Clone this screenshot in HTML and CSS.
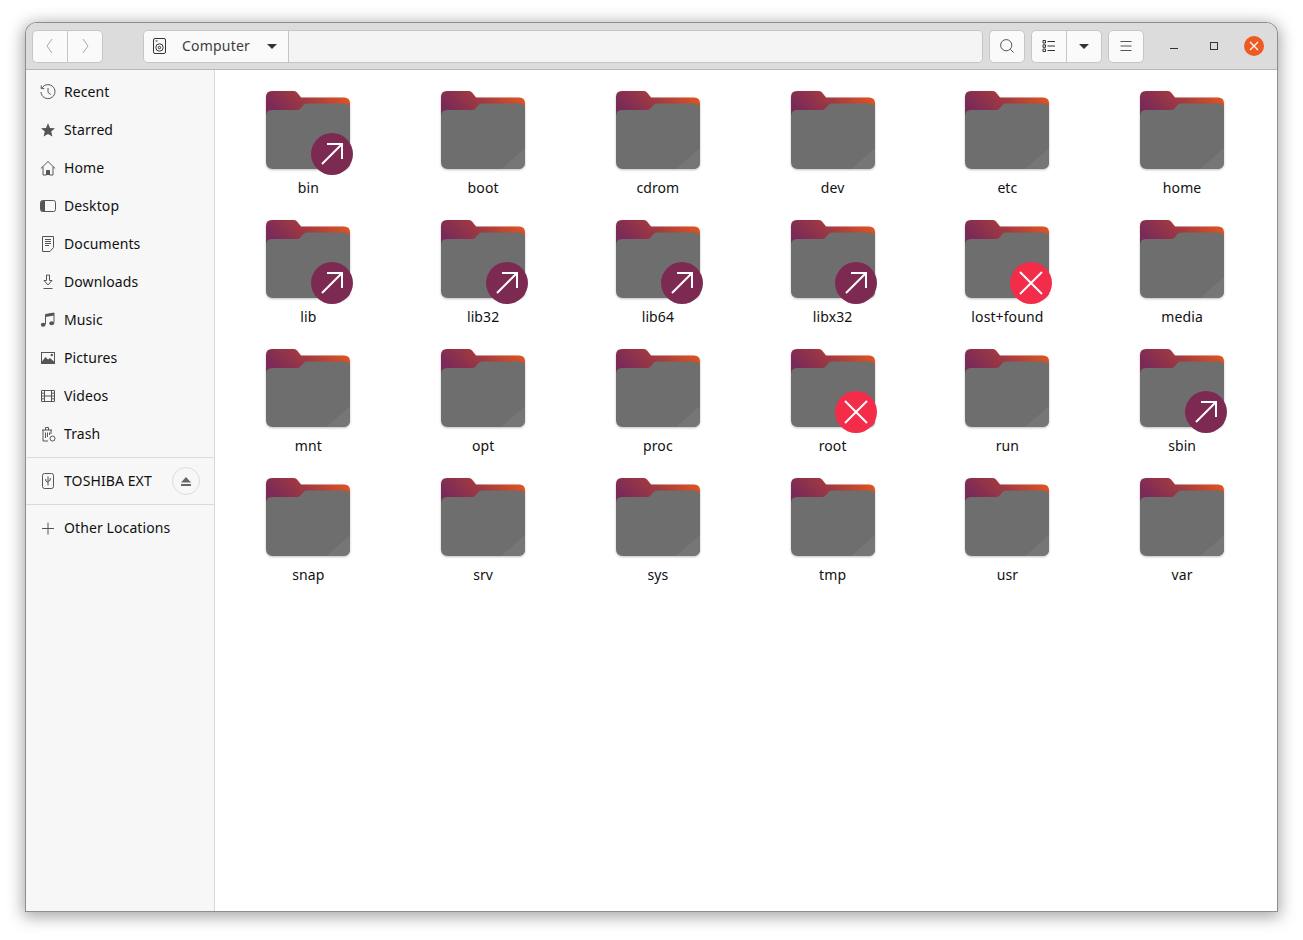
FILE: index.html
```html
<!DOCTYPE html>
<html lang="en">
<head>
  <meta charset="UTF-8">
  <title>Computer</title>
  <link rel="stylesheet" href="styles.css">
</head>
<body>

<svg class="defs" width="0" height="0">
  <defs>
    <linearGradient id="back" x1="0" y1="0.35" x2="1" y2="0">
      <stop offset="0" stop-color="#7a2a58"/>
      <stop offset="0.45" stop-color="#a33a40"/>
      <stop offset="1" stop-color="#ea5a1c"/>
    </linearGradient>
    <symbol id="folder" viewBox="0 0 90 86">
      <path d="M0 24V6Q0 0 6 0H28Q30 0 31 1.5L35 6.5H78Q84 6.5 84 12.5V30H0Z" fill="url(#back)"/>
      <path d="M0 71V25Q0 19 6 19H31Q33 19 34 18L38 13.5Q39 12.5 41 12.5H78Q84 12.5 84 18V71Q84 78 77 78H7Q0 78 0 71Z" fill="#6e6e6e"/>
      <path d="M84 57V71Q84 78 77 78H60Z" fill="#767676"/>
    </symbol>
    <symbol id="link" viewBox="0 0 42 42">
      <circle cx="21" cy="21" r="21" fill="#7d2a53"/>
      <path d="M11 31L31 11M16 11H31V26" fill="none" stroke="#fff" stroke-width="2"/>
    </symbol>
    <symbol id="denied" viewBox="0 0 42 42">
      <circle cx="21" cy="21" r="21" fill="#f32c49"/>
      <path d="M10 10L32 32M32 10L10 32" fill="none" stroke="#fff" stroke-width="2"/>
    </symbol>
  </defs>
</svg>

<div class="window">
  <header class="toolbar">
    <div class="btn-group nav">
      <button class="btn"><svg width="16" height="16" viewBox="0 0 16 16"><path d="M10 1L5 8L10 15" class="ico faint"/></svg></button>
      <button class="btn"><svg width="16" height="16" viewBox="0 0 16 16"><path d="M6 1L11 8L6 15" class="ico faint"/></svg></button>
    </div>
    <div class="path-bar">
      <div class="path-current">
        <svg width="14" height="16" viewBox="0 0 14 16"><rect x="0.5" y="0.5" width="12" height="15" rx="1.5" class="ico dark"/><circle cx="6.5" cy="9.5" r="3.7" class="ico dark"/><circle cx="6.5" cy="9.5" r="1.2" class="ico dark"/><path d="M2.5 3H4.5" class="ico dark"/></svg>
        <span>Computer</span>
        <i class="caret"></i>
      </div>
      <div class="path-rest"></div>
    </div>
    <button class="btn solo"><svg width="16" height="16" viewBox="0 0 16 16"><circle cx="7.2" cy="7.2" r="5.6" class="ico"/><path d="M11.4 11.4L14.6 14.6" class="ico"/></svg></button>
    <div class="btn-group view">
      <button class="btn"><svg width="14" height="14" viewBox="0 0 14 14"><path d="M1 1.5H3.5V4H1ZM1 5.8H3.5V8.3H1ZM1 10H3.5V12.5H1ZM5.5 2.5H13M5.5 7H13M5.5 11.5H13" class="ico dark"/></svg></button>
      <button class="btn"><i class="caret"></i></button>
    </div>
    <button class="btn solo"><svg width="14" height="14" viewBox="0 0 14 14"><path d="M1.5 2.5H12.5M1.5 7H12.5M1.5 11.5H12.5" class="ico"/></svg></button>
    <div class="win-controls">
      <div class="win-slot"><svg width="10" height="10" viewBox="0 0 10 10"><path d="M1 7.5H9" class="ico dark"/></svg></div>
      <div class="win-slot"><svg width="10" height="10" viewBox="0 0 10 10"><rect x="1.5" y="1.5" width="7" height="7" class="ico dark"/></svg></div>
      <div class="win-slot"><div class="close"><svg width="10" height="10" viewBox="0 0 10 10"><path d="M1 1L9 9M9 1L1 9" fill="none" stroke="#fff" stroke-width="1.2"/></svg></div></div>
    </div>
  </header>

  <div class="body">
    <aside class="sidebar">
      <ul class="places">
        <li><svg width="16" height="16" viewBox="0 0 16 16"><path d="M2 4A7 7 0 1 1 1 8M1.2 1.5V4.6H4.3M8 4V8.4L10.8 10.6" class="ico"/></svg>Recent</li>
        <li><svg width="16" height="16" viewBox="0 0 16 16"><path d="M8 1.2L10 5.9L15 6.3L11.2 9.6L12.4 14.6L8 11.9L3.6 14.6L4.8 9.6L1 6.3L6 5.9Z" fill="#555"/></svg>Starred</li>
        <li><svg width="16" height="16" viewBox="0 0 16 16"><path d="M0.8 8.5L8 1.5L15.2 8.5M3 6.8V15H6.5V10.5H9.5V15H13V6.8" class="ico"/><rect x="6.5" y="10.5" width="3" height="4.5" fill="#555"/></svg>Home</li>
        <li><svg width="16" height="16" viewBox="0 0 16 16"><rect x="0.5" y="2.5" width="15" height="11" rx="2" class="ico"/><path d="M1 4Q1 3 2 3H5V13H2Q1 13 1 12Z" fill="#555"/></svg>Desktop</li>
        <li><svg width="16" height="16" viewBox="0 0 16 16"><path d="M2.5 0.5H13.5V11.5L10 15.5H2.5ZM5 3.5H11M5 5.5H11M5 7.5H11M5 9.5H9" class="ico"/></svg>Documents</li>
        <li><svg width="16" height="16" viewBox="0 0 16 16"><path d="M6.5 1H9.5V6.5H12L8 11L4 6.5H6.5ZM3.5 14.5H12.5" class="ico"/></svg>Downloads</li>
        <li><svg width="16" height="16" viewBox="0 0 16 16"><path d="M5.5 12V2.5L14 1V10.5" class="ico"/><path d="M5.5 2.5L14 1V3.5L5.5 5Z" fill="#555"/><ellipse cx="3.2" cy="12.8" rx="2.4" ry="2" fill="#555"/><ellipse cx="11.7" cy="11.3" rx="2.4" ry="2" fill="#555"/></svg>Music</li>
        <li><svg width="16" height="16" viewBox="0 0 16 16"><rect x="1.5" y="2.5" width="13" height="11" class="ico"/><path d="M1.5 12L5.5 7L8 9.5L10 8L14.5 12V14H1.5Z" fill="#555"/><circle cx="11.8" cy="5" r="1.2" fill="#555"/></svg>Pictures</li>
        <li><svg width="16" height="16" viewBox="0 0 16 16"><path d="M1.5 2.5H14.5V13.5H1.5ZM4.5 2.5V13.5M11.5 2.5V13.5M4.5 8H11.5M1.5 5.2H4.5M1.5 8H4.5M1.5 10.8H4.5M11.5 5.2H14.5M11.5 8H14.5M11.5 10.8H14.5" class="ico"/></svg>Videos</li>
        <li><svg width="16" height="16" viewBox="0 0 16 16"><path d="M2 4H12M5.5 4V1.5H8.5V4M3 4V15H8M11 4V8M5.5 6.5V12M7.5 6.5V11M9.5 6.5V9" class="ico"/><circle cx="12.5" cy="12.5" r="2.5" class="ico"/></svg>Trash</li>
      </ul>
      <div class="device">
        <svg width="16" height="16" viewBox="0 0 16 16"><rect x="2.5" y="0.5" width="11" height="15" rx="2" class="ico"/><path d="M8 3.5V12.5M5.8 6V8L8 9.5M10.2 5V7.2L8 8.5" class="ico"/></svg>
        <span>TOSHIBA EXT</span>
        <div class="eject"><svg width="10" height="9" viewBox="0 0 10 9"><path d="M5 0L10 5.5H0ZM0 7H10V9H0Z" fill="#666"/></svg></div>
      </div>
      <div class="other">
        <svg width="16" height="16" viewBox="0 0 16 16"><path d="M8 2.5V14.5M2 8.5H14" class="ico"/></svg>Other Locations
      </div>
    </aside>

    <main class="files">
      <div class="file"><svg class="folder"><use href="#folder"/></svg><svg class="emblem"><use href="#link"/></svg><span>bin</span></div>
      <div class="file"><svg class="folder"><use href="#folder"/></svg><span>boot</span></div>
      <div class="file"><svg class="folder"><use href="#folder"/></svg><span>cdrom</span></div>
      <div class="file"><svg class="folder"><use href="#folder"/></svg><span>dev</span></div>
      <div class="file"><svg class="folder"><use href="#folder"/></svg><span>etc</span></div>
      <div class="file"><svg class="folder"><use href="#folder"/></svg><span>home</span></div>
      <div class="file"><svg class="folder"><use href="#folder"/></svg><svg class="emblem"><use href="#link"/></svg><span>lib</span></div>
      <div class="file"><svg class="folder"><use href="#folder"/></svg><svg class="emblem"><use href="#link"/></svg><span>lib32</span></div>
      <div class="file"><svg class="folder"><use href="#folder"/></svg><svg class="emblem"><use href="#link"/></svg><span>lib64</span></div>
      <div class="file"><svg class="folder"><use href="#folder"/></svg><svg class="emblem"><use href="#link"/></svg><span>libx32</span></div>
      <div class="file"><svg class="folder"><use href="#folder"/></svg><svg class="emblem"><use href="#denied"/></svg><span>lost+found</span></div>
      <div class="file"><svg class="folder"><use href="#folder"/></svg><span>media</span></div>
      <div class="file"><svg class="folder"><use href="#folder"/></svg><span>mnt</span></div>
      <div class="file"><svg class="folder"><use href="#folder"/></svg><span>opt</span></div>
      <div class="file"><svg class="folder"><use href="#folder"/></svg><span>proc</span></div>
      <div class="file"><svg class="folder"><use href="#folder"/></svg><svg class="emblem"><use href="#denied"/></svg><span>root</span></div>
      <div class="file"><svg class="folder"><use href="#folder"/></svg><span>run</span></div>
      <div class="file"><svg class="folder"><use href="#folder"/></svg><svg class="emblem"><use href="#link"/></svg><span>sbin</span></div>
      <div class="file"><svg class="folder"><use href="#folder"/></svg><span>snap</span></div>
      <div class="file"><svg class="folder"><use href="#folder"/></svg><span>srv</span></div>
      <div class="file"><svg class="folder"><use href="#folder"/></svg><span>sys</span></div>
      <div class="file"><svg class="folder"><use href="#folder"/></svg><span>tmp</span></div>
      <div class="file"><svg class="folder"><use href="#folder"/></svg><span>usr</span></div>
      <div class="file"><svg class="folder"><use href="#folder"/></svg><span>var</span></div>
    </main>
  </div>
</div>

</body>
</html>
```

FILE: styles.css
```css
html,
body {
  margin: 0;
  height: 100%;
  overflow: hidden;
}

body {
  background: #fff;
  padding: 23px 26px 29px;
  box-sizing: border-box;
  font-family: 'Noto Sans', sans-serif;
  font-size: 14px;
  letter-spacing: 0.1px;
  color: #111;
}

.defs {
  position: absolute;
}

svg {
  display: block;
  flex: none;
}

.ico {
  fill: none;
  stroke: #555;
  stroke-width: 1;
}

.ico.faint {
  stroke: #a8a8a8;
}

.ico.dark {
  stroke: #333;
}

.window {
  height: 100%;
  display: flex;
  flex-direction: column;
  border-radius: 11px 11px 0 0;
  overflow: hidden;
  box-shadow: 0 0 0 1px #8e8e8e, 0 3px 16px 3px rgba(0, 0, 0, 0.35);
  background: #fff;
}

/* header */
.toolbar {
  height: 47px;
  flex: none;
  display: flex;
  align-items: center;
  padding: 0 3px 0 6px;
  background: #dcdcdc;
  border-bottom: 1px solid #b8b8b8;
  box-sizing: border-box;
}

.btn {
  width: 36px;
  height: 33px;
  padding: 0;
  display: flex;
  align-items: center;
  justify-content: center;
  background: #fafafa;
  border: 1px solid #c6c6c6;
  border-radius: 5px;
}

.btn-group {
  display: flex;
}

.btn-group .btn:first-child {
  width: 35px;
  border-radius: 5px 0 0 5px;
  border-right: 0;
}

.btn-group .btn:last-child {
  border-radius: 0 5px 5px 0;
}

.nav {
  margin-right: 40px;
}

.path-bar {
  flex: 1;
  display: flex;
  height: 33px;
  margin-right: 6px;
  border: 1px solid #c6c6c6;
  border-radius: 5px;
  box-sizing: border-box;
  overflow: hidden;
}

.path-current {
  width: 145px;
  flex: none;
  display: flex;
  align-items: center;
  padding: 0 0 2px 9px;
  box-sizing: border-box;
  background: #fafafa;
  border-right: 1px solid #c6c6c6;
  color: #3d3d3d;
}

.path-current svg {
  margin-top: 2px;
}

.path-current span {
  margin-left: 15px;
  flex: 1;
  letter-spacing: 0.2px;
}

.path-current .caret {
  margin: 2px 11px 0 0;
}

.path-rest {
  flex: 1;
  background: #f4f4f4;
}

.caret {
  width: 0;
  height: 0;
  border-left: 5px solid transparent;
  border-right: 5px solid transparent;
  border-top: 5px solid #333;
}

.view {
  margin: 0 6px;
}

.win-controls {
  flex: none;
  display: flex;
  margin-left: 10px;
}

.win-slot {
  width: 40px;
  display: flex;
  align-items: center;
  justify-content: center;
}

.close {
  width: 20px;
  height: 20px;
  border-radius: 50%;
  background: #ed5a24;
  display: flex;
  align-items: center;
  justify-content: center;
}

/* sidebar */
.body {
  flex: 1;
  display: flex;
  min-height: 0;
}

.sidebar {
  width: 189px;
  flex: none;
  background: #f7f7f7;
  border-right: 1px solid #d8d8d8;
  box-sizing: border-box;
}

.places {
  list-style: none;
  margin: 0;
  padding: 3px 0 4px;
  border-bottom: 1px solid #dadada;
}

.places li,
.device,
.other {
  display: flex;
  align-items: center;
  gap: 8px;
  padding: 0 0 2px 14px;
  box-sizing: border-box;
}

.places li > svg,
.device > svg,
.other > svg,
.eject {
  margin-top: 2px;
}

.places li {
  height: 38px;
}

.device {
  height: 47px;
  border-bottom: 1px solid #dadada;
  padding-right: 14px;
  white-space: nowrap;
}

.device span {
  flex: 1;
}

.eject {
  width: 28px;
  height: 28px;
  box-sizing: border-box;
  border: 1px solid #dcdcdc;
  border-radius: 50%;
  display: flex;
  align-items: center;
  justify-content: center;
}

.other {
  height: 46px;
}

/* icon grid */
.files {
  flex: 1;
  display: grid;
  grid-template-columns: repeat(6, 174.75px);
  grid-auto-rows: 129px;
  align-content: start;
  padding: 21px 0 0 6px;
}

.file {
  position: relative;
  display: flex;
  flex-direction: column;
  align-items: center;
}

.folder {
  width: 90px;
  height: 86px;
  margin-left: 6px;
  filter: drop-shadow(0 1px 1px rgba(0, 0, 0, 0.25));
}

.emblem {
  position: absolute;
  left: 90px;
  top: 42px;
  width: 42px;
  height: 42px;
}

.file span {
  margin-top: 1px;
  line-height: 20px;
}
```
